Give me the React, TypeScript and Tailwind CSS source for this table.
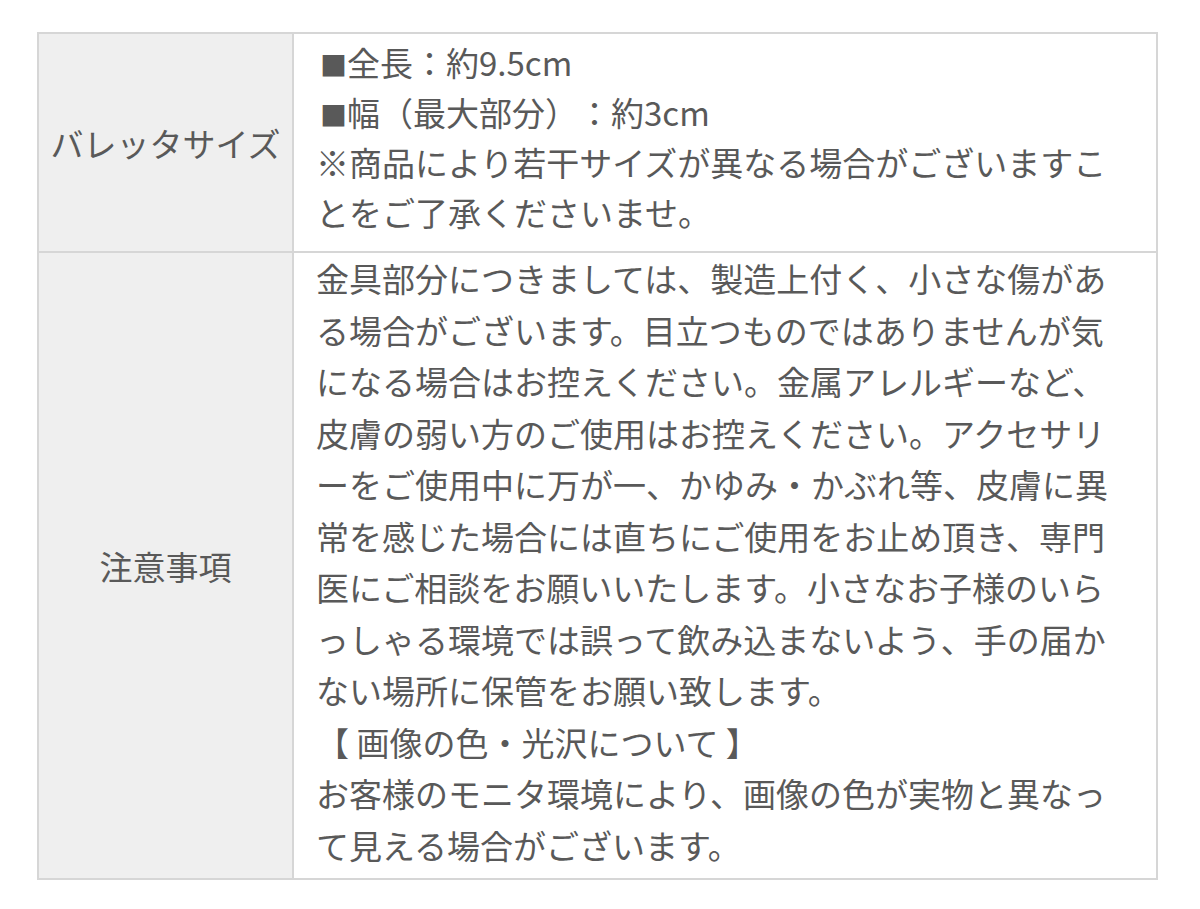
import React from 'react';

const font = { fontFamily: '"Noto Sans CJK JP", "Noto Sans", sans-serif' };

const App = () => {
  return (
    <div className="min-h-[909px] bg-white pt-[32px] pl-[37px]" style={font}>
      <table className="w-[1121px] border-collapse text-[33px] text-[#595959] [text-spacing-trim:space-all]">
        <tbody>
          <tr>
            <th className="w-[257px] border-2 border-[#d6d6d6] bg-[#efefef] text-center font-normal align-middle leading-[50px]">
              バレッタサイズ
            </th>
            <td className="border-2 border-[#d6d6d6] pl-[22px] pr-[40px] pt-[3px] pb-[14px] align-top leading-[50px]">
              <div className="w-[800px] [line-break:loose]">
                <span className="pl-[4px] text-[27px] leading-none">■</span>全長：約9.5cm
                <br />
                <span className="pl-[4px] text-[27px] leading-none">■</span>幅（最大部分）：約3cm
                <br />
                ※商品により若干サイズが異なる場合がございますことをご了承くださいませ。
              </div>
            </td>
          </tr>
          <tr>
            <th className="border-2 border-[#d6d6d6] bg-[#efefef] text-center font-normal align-middle leading-[50px]">
              注意事項
            </th>
            <td className="border-2 border-[#d6d6d6] pl-[22px] pr-[40px] pt-0 pb-[7px] align-top leading-[51.5px]">
              <div className="w-[800px] [line-break:loose]">
                金具部分につきましては、製造上付く、小さな傷がある場合がございます。目立つものではありませんが気になる場合はお控えください。金属アレルギーなど、皮膚の弱い方のご使用はお控えください。アクセサリーをご使用中に万が一、かゆみ・かぶれ等、皮膚に異常を感じた場合には直ちにご使用をお止め頂き、専門医にご相談をお願いいたします。小さなお子様のいらっしゃる環境では誤って飲み込まないよう、手の届かない場所に保管をお願い致します。
                <br />
                【 画像の色・光沢について 】
                <br />
                お客様のモニタ環境により、画像の色が実物と異なって見える場合がございます。
              </div>
            </td>
          </tr>
        </tbody>
      </table>
    </div>
  );
};

export default App;
